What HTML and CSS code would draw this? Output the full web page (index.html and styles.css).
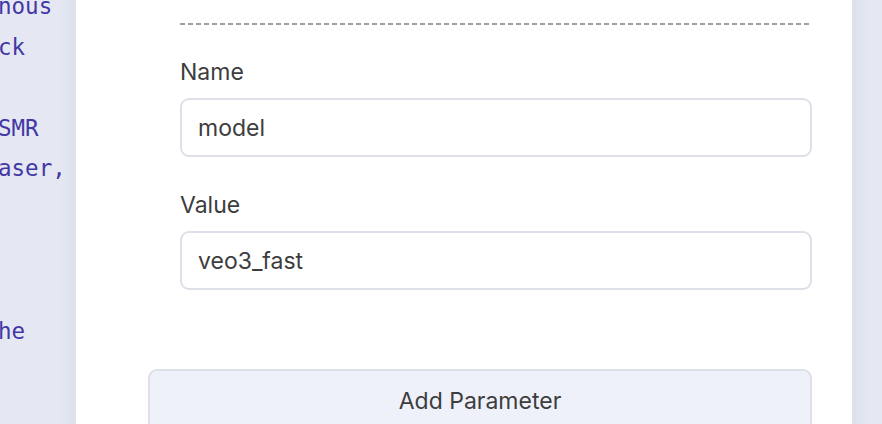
FILE: index.html
```html
<!DOCTYPE html>
<html lang="en">
<head>
    <meta charset="UTF-8">
    <meta name="viewport" content="width=device-width, initial-scale=1.0">
    <title>Request parameters</title>
    <link rel="stylesheet" href="styles.css">
</head>
<body>
    <div class="layout">
        <aside class="prompt-pane">
            <pre class="prompt-text">nous
ck

SMR
aser,



he</pre>
        </aside>

        <main class="modal">
            <div class="param-list">
                <div class="param">
                    <hr class="divider">
                    <label class="field-label" for="param-name">Name</label>
                    <input class="field-input" id="param-name" type="text" value="model">
                    <label class="field-label" for="param-value">Value</label>
                    <input class="field-input" id="param-value" type="text" value="veo3_fast">
                </div>
            </div>
            <button class="add-button" type="button">Add Parameter</button>
        </main>

        <aside class="side-pane"></aside>
    </div>
</body>
</html>
```

FILE: styles.css
```css
body {
    margin: 0;
    padding: 0;
    font-family: Inter, "Noto Sans", sans-serif;
    color: #3d3d3d;
    background-color: #e4e7f1;
    overflow: hidden;
}
.layout {
    display: flex;
    height: 424px;
}
.prompt-pane {
    width: 76px;
    flex-shrink: 0;
    overflow: hidden;
    background: linear-gradient(to right, #e5e8f2 0%, #e5e8f2 80%, #dce0eb 100%);
}
.prompt-text {
    margin: -14px 0 0 -2px;
    font-family: "DejaVu Sans Mono", monospace;
    font-size: 22.5px;
    line-height: 40.6px;
    color: #4337a6;
}
.modal {
    width: 776px;
    flex-shrink: 0;
    box-sizing: border-box;
    padding: 0 40px 0 72px;
    background: white;
}
.param-list {
    padding-left: 32px;
}
.divider {
    margin: 23px 0 0;
    border: none;
    height: 2px;
    background: repeating-linear-gradient(to right, #a2a2a2 0, #a2a2a2 5px, transparent 5px, transparent 8px);
}
.field-label {
    display: block;
    margin-top: 32px;
    font-size: 23px;
    line-height: 30px;
}
.field-label + .field-input {
    margin-top: 11px;
}
.field-input + .field-label {
    margin-top: 33px;
}
.field-input {
    display: block;
    width: 100%;
    height: 59px;
    box-sizing: border-box;
    padding: 0 16px;
    font-family: inherit;
    font-size: 23px;
    color: #3d3d3d;
    border: 2px solid #dde0e9;
    border-radius: 9px;
    background: white;
    outline: none;
}
.add-button {
    display: block;
    width: 100%;
    height: 64px;
    margin-top: 79px;
    font-family: inherit;
    font-size: 23px;
    color: #3d3d3d;
    background-color: #eef1f9;
    border: 2px solid #dde0e9;
    border-radius: 9px;
    cursor: pointer;
}
.side-pane {
    flex: 1;
    background: linear-gradient(to right, #dce0eb 0%, #e5e8f2 60%);
}
```
